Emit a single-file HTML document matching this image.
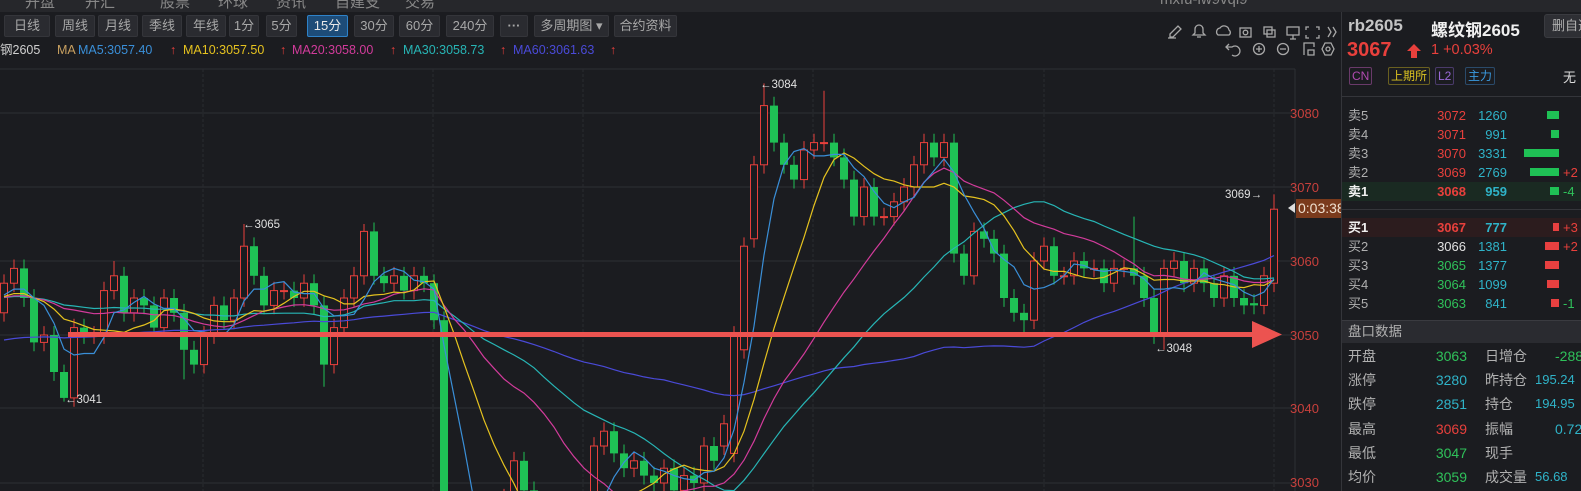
<!DOCTYPE html>
<html><head><meta charset="utf-8">
<style>
*{margin:0;padding:0;box-sizing:border-box}
body{width:1581px;height:491px;overflow:hidden;background:#1b1c20;font-family:"Liberation Sans","Noto Sans CJK SC",sans-serif;color:#b8b8b8;position:relative}
.a{position:absolute;white-space:nowrap}
.topbar{left:0;top:0;width:1581px;height:12px;background:#26272b;overflow:hidden}
.topbar span{position:absolute;top:-9px;font-size:15px;color:#888}
.btn{position:absolute;top:15px;height:22px;background:#2a2b30;border:1px solid #34353a;border-radius:2px;font-size:13px;color:#a8a8a8;text-align:center;line-height:20px}
.leg{top:42px;font-size:12.5px;line-height:16px}
.r{color:#e8403c}
.ob{font-size:13px;line-height:19px}
.tag{position:absolute;top:67px;height:18px;font-size:12px;line-height:16px;border:1px solid;border-radius:2px;padding:0 2px}
</style></head><body>
<div class="a topbar"><span style="left:25px">开盘</span><span style="left:85px">开汇</span><span style="left:160px">股票</span><span style="left:218px">环球</span><span style="left:276px">资讯</span><span style="left:335px">自建支</span><span style="left:405px">交易</span><span style="left:1160px">mxfu-lw9vqi9</span></div>

<svg class="a" style="left:0;top:0" width="1342" height="491" id="chart"></svg>

<div class="btn" style="left:4px;width:46px">日线</div>
<div class="btn" style="left:55px;width:40px">周线</div>
<div class="btn" style="left:98px;width:40px">月线</div>
<div class="btn" style="left:142px;width:40px">季线</div>
<div class="btn" style="left:186px;width:40px">年线</div>
<div class="btn" style="left:229px;width:30px">1分</div>
<div class="btn" style="left:266px;width:31px">5分</div>
<div class="btn" style="left:307px;width:41px;background:#1d4c78;border-color:#2e82c8;color:#e8e8e8">15分</div>
<div class="btn" style="left:354px;width:40px">30分</div>
<div class="btn" style="left:399px;width:41px">60分</div>
<div class="btn" style="left:446px;width:48px">240分</div>
<div class="btn" style="left:500px;width:28px;font-weight:bold">···</div>
<div class="btn" style="left:534px;width:75px">多周期图 ▾</div>
<div class="btn" style="left:614px;width:63px">合约资料</div>

<div class="a leg" style="left:0;color:#d0d0d0">钢2605</div>
<div class="a leg" style="left:57px;color:#c8a060">MA</div>
<div class="a leg" style="left:78px;color:#3a8fd8">MA5:3057.40</div>
<div class="a leg r" style="left:170px">↑</div>
<div class="a leg" style="left:183px;color:#e5c21f">MA10:3057.50</div>
<div class="a leg r" style="left:280px">↑</div>
<div class="a leg" style="left:292px;color:#d23b9b">MA20:3058.00</div>
<div class="a leg r" style="left:390px">↑</div>
<div class="a leg" style="left:403px;color:#27b5b5">MA30:3058.73</div>
<div class="a leg r" style="left:500px">↑</div>
<div class="a leg" style="left:513px;color:#4a4ad8">MA60:3061.63</div>
<div class="a leg r" style="left:610px">↑</div>

<svg class="a" style="left:1150px;top:14px" width="190" height="46" fill="none" stroke="#a8a8a8" stroke-width="1.3">
<path d="M20 20 L28 12 L31 15 L23 23 L20 23 Z M18 24 H26"/>
<path d="M45 19 V15 a4 4 0 0 1 8 0 V19 L55 21 H43 Z M47 23 H51"/>
<path d="M68 21 a4 4 0 0 1 2-7 a5 5 0 0 1 9 2 a3 3 0 0 1 0 5 Z"/>
<rect x="90" y="14" width="11" height="9"/><circle cx="95.5" cy="18.5" r="2.3"/>
<rect x="114" y="13" width="8" height="7"/><rect x="117" y="16" width="8" height="7"/>
<rect x="137" y="13" width="12" height="8"/><path d="M140 25 H146 M143 21 V25"/>
<path d="M159 13 H156 V16 M166 13 H169 V16 M159 24 H156 V21 M166 24 H169 V21"/>
<path d="M178 13 L181 18 L178 23 M183 13 L186 18 L183 23"/>
<path d="M82 41 a5 5 0 1 0 0-8 H76 M79 30 L76 33 L79 36"/>
<circle cx="109" cy="35" r="5.5"/><path d="M106 35 H112 M109 32 V38"/>
<circle cx="133" cy="35" r="5.5"/><path d="M130 35 H136"/>
<path d="M154 41 V29 H164 V33 M158 41 V36 H164 V41 Z"/>
<path d="M175 29 L181 29 L184 35 L181 41 L175 41 L172 35 Z"/><circle cx="178" cy="35" r="2"/>
</svg>

<div class="a" style="left:1296px;top:199px;width:45px;height:19px;background:#7a3a1c;color:#f0e0d0;font-size:14px;line-height:19px;padding-left:2px;overflow:hidden">0:03:38</div>
<div class="a" style="left:1288px;top:203px;width:0;height:0;border-top:5px solid transparent;border-bottom:5px solid transparent;border-right:7px solid #ddd"></div>

<div class="a" style="left:1341px;top:12px;width:1px;height:479px;background:#34353a"></div>
<div class="a" style="left:1348px;top:16px;font-size:17px;font-weight:bold;color:#c4c4c4">rb2605</div>
<div class="a" style="left:1431px;top:16px;font-size:17px;font-weight:bold;color:#f0f0f0">螺纹钢2605</div>
<div class="a" style="left:1544px;top:14px;width:40px;height:24px;background:#2e2f34;border:1px solid #3a3b40;border-radius:3px;font-size:13px;line-height:22px;padding-left:7px;color:#b0b0b0;overflow:hidden">删自选</div>
<div class="a" style="left:1347px;top:39px;font-size:20px;font-weight:bold;color:#e8403c">3067</div>
<svg class="a" style="left:1407px;top:44px" width="14" height="14"><path d="M7 0 L14 7 H10 V14 H4 V7 H0 Z" fill="#e8403c"/></svg>
<div class="a r" style="left:1431px;top:42px;font-size:14.5px">1 +0.03%</div>
<div class="tag" style="left:1349px;color:#b04ab0;border-color:#6a3a6a">CN</div>
<div class="tag" style="left:1388px;color:#d8c020;border-color:#6a6020">上期所</div>
<div class="tag" style="left:1435px;color:#9a6ad8;border-color:#4a3a6a">L2</div>
<div class="tag" style="left:1465px;color:#3a9ae0;border-color:#2a4a6a">主力</div>
<div class="a" style="left:1563px;top:67px;font-size:13px;color:#ddd">无</div>
<div class="a" style="left:1342px;top:96px;width:239px;height:1px;background:#34353a"></div>

<div class="a" style="left:1342px;top:182px;width:239px;height:19px;background:#1a2a22"></div>
<div class="a" style="left:1342px;top:209px;width:239px;height:1px;background:#34353a"></div>
<div class="a" style="left:1342px;top:218px;width:239px;height:19px;background:#2c1c1e"></div>
<div class="a" style="left:1342px;top:321px;width:239px;height:22px;background:#2a2b30"></div>
<div class="a" style="left:1342px;top:320px;width:239px;height:1px;background:#3a3b40"></div>

<div id="ob"></div>
<script>
(function(){
var H='';
function t(x,y,s,c,st){H+='<div class="a ob" style="left:'+x+'px;top:'+y+'px;color:'+c+';'+(st||'')+'">'+s+'</div>';}
function tr(xr,y,s,c,st){H+='<div class="a ob" style="right:'+(1581-xr)+'px;top:'+y+'px;color:'+c+';'+(st||'')+'">'+s+'</div>';}
var rows=[["卖5",106,"3072","1260",12,"",""],["卖4",125,"3071","991",8,"",""],["卖3",144,"3070","3331",35,"",""],["卖2",163,"3069","2769",29,"+2","#e8403c"],["卖1",182,"3068","959",9,"-4","#2fc15a"]];
rows.forEach(function(r,i){var b=i==4?'font-weight:bold;':'';t(1348,r[1],r[0],i==4?'#f0f0f0':'#b0b0b0',b);tr(1466,r[1],r[2],'#e8403c',b);tr(1507,r[1],r[3],'#2fb3c8',b);
H+='<div class="a" style="left:'+(1559-r[4])+'px;top:'+(r[1]+5)+'px;width:'+r[4]+'px;height:8px;background:#1fc155"></div>';if(r[5])t(1563,r[1],r[5],r[6]);});
var rb=[["买1",218,"3067","777",6,"+3","#e8403c","#e8403c"],["买2",237,"3066","1381",14,"+2","#e8403c","#e0e0e0"],["买3",256,"3065","1377",14,"","","#2fc15a"],["买4",275,"3064","1099",12,"","","#2fc15a"],["买5",294,"3063","841",8,"-1","#2fc15a","#2fc15a"]];
rb.forEach(function(r,i){var b=i==0?'font-weight:bold;':'';t(1348,r[1],r[0],i==0?'#f0f0f0':'#b0b0b0',b);tr(1466,r[1],r[2],r[7],b);tr(1507,r[1],r[3],'#2fb3c8',b);
H+='<div class="a" style="left:'+(1559-r[4])+'px;top:'+(r[1]+5)+'px;width:'+r[4]+'px;height:8px;background:#e84040"></div>';if(r[5])t(1563,r[1],r[5],r[6]);});
t(1348,322,"盘口数据","#b0b0b0","font-size:13.5px;line-height:20px");
var d=[["开盘","3063","#2fc15a","日增仓","-288","#2fc15a"],["涨停","3280","#2fb3c8","昨持仓","195.24","#2fb3c8"],["跌停","2851","#2fb3c8","持仓","194.95","#2fb3c8"],["最高","3069","#e8403c","振幅","0.72","#2fb3c8"],["最低","3047","#2fc15a","现手","",""],["均价","3059","#2fc15a","成交量","56.68","#2fb3c8"]];
d.forEach(function(r,i){var y=346+i*24.2;var s='font-size:14px;line-height:20px';t(1348,y,r[0],'#b0b0b0',s);tr(1467,y,r[1],r[2],s);t(1485,y,r[3],'#b0b0b0',s);if(r[4])t(r[4].length>4?1535:1555,y,r[4],r[5],s+(r[4].length>4?';font-size:13px':''));});
document.getElementById('ob').innerHTML=H;

var S='';
function Y(p){return 113+(3080-p)*7.4;}
[69,113,187,261,335,408,483].forEach(function(y){S+='<line x1="0" y1="'+y+'" x2="1295" y2="'+y+'" stroke="#2e2f34" stroke-width="1"/>';});
[203,433,583,813,1044,1274].forEach(function(x){S+='<line x1="'+x+'" y1="69" x2="'+x+'" y2="491" stroke="#2a2b30" stroke-dasharray="3,2"/>';});
S+='<line x1="1295" y1="69" x2="1295" y2="491" stroke="#2e2f34"/>';
[[3080,113],[3070,187],[3060,261],[3050,335],[3040,408],[3030,482]].forEach(function(a){S+='<text x="1290" y="'+(a[1]+5)+'" fill="#c8403c" font-size="13" font-family="Liberation Sans">'+a[0]+'</text>';});
var C=[3057,3059,3055,3049,3050,3045,3041.5,3051,3050,3050,3056,3058,3053,3055,3054,3051,3055,3053,3048,3046,3050,3054,3052,3055,3062,3058,3054,3056,3056,3055,3057,3054,3046,3051,3055,3058,3064,3058,3057,3058,3056,3058,3057,3052,3020,3022,3024,3020,3018,3025,3028,3033,3029,3026,3024,3022,3020,3022,3026,3035,3037,3034,3032,3033,3031,3030,3032,3029,3031,3030,3035,3033,3038,3050,3062,3073,3081,3076,3073,3071,3075,3076,3076,3074,3071,3066,3070,3066,3066,3068,3070,3073,3076,3074,3076,3061,3058,3064,3063,3061,3055,3053,3052,3060,3062,3058,3058,3060,3059,3059,3057,3059,3059,3058,3055,3050,3059,3060,3057,3059,3057,3055,3058,3055,3054,3054,3058,3067];
var O=[3053];for(var i=1;i<C.length;i++)O.push(C[i-1]);
O[44]=3052;O[72]=3035;O[73]=3034;O[74]=3048;O[75]=3063;O[76]=3073;O[95]=3076;O[127]=3057;O[116]=3050;O[6]=3045;O[125]=3054.3;
var HI={6:3046,24:3065,76:3084,82:3083,113:3066,127:3069,36:3065,11:3060};
var LO={6:3041,116:3048,102:3050,32:3043,18:3044};
for(var i=0;i<C.length;i++){var x=4+10*i,o=O[i],c=C[i],up=c>=o;var h=HI[i]||Math.max(o,c)+1.2,l=LO[i]||Math.min(o,c)-1.2;
var col=up?'#e8403c':'#1fc155';var yt=Y(Math.max(o,c)),yb=Y(Math.min(o,c));if(yb-yt<1)yb=yt+1;
S+='<line x1="'+x+'" y1="'+Y(h)+'" x2="'+x+'" y2="'+Y(l)+'" stroke="'+col+'"/>';
if(up)S+='<rect x="'+(x-3.5)+'" y="'+yt+'" width="7" height="'+(yb-yt)+'" fill="#1b1c20" stroke="'+col+'"/>';
else S+='<rect x="'+(x-4)+'" y="'+yt+'" width="8" height="'+(yb-yt)+'" fill="'+col+'"/>';}
function ma(n,col){var pre=[];for(var k=0;k<70;k++)pre.push(n>=60?3046+k*0.08:3055);var all=pre.concat(C),pts=[];
for(var i=0;i<C.length;i++){var j=i+70,s=0;for(var k=0;k<n;k++)s+=all[j-k];pts.push((4+10*i)+','+Y(s/n).toFixed(1));}
S+='<polyline points="'+pts.join(' ')+'" fill="none" stroke="'+col+'" stroke-width="1.2"/>';}
ma(60,'#4a4ad8');ma(30,'#27b5b5');ma(20,'#d23b9b');ma(10,'#e5c21f');ma(5,'#3a8fd8');
S+='<rect x="68" y="332" width="1190" height="5" fill="#ec5350"/><path d="M1252 321 L1282 334.5 L1252 348 Z" fill="#ec5350"/>';
function lab(x,y,s){S+='<text x="'+x+'" y="'+y+'" fill="#e0e0e0" font-size="11.5" font-family="Liberation Sans">'+s+'</text>';}
lab(65,403,'←3041');lab(243,228,'←3065');lab(760,88,'←3084');lab(1155,352,'←3048');lab(1225,198,'3069→');
document.getElementById('chart').innerHTML=S;
})();
</script>
</body></html>
